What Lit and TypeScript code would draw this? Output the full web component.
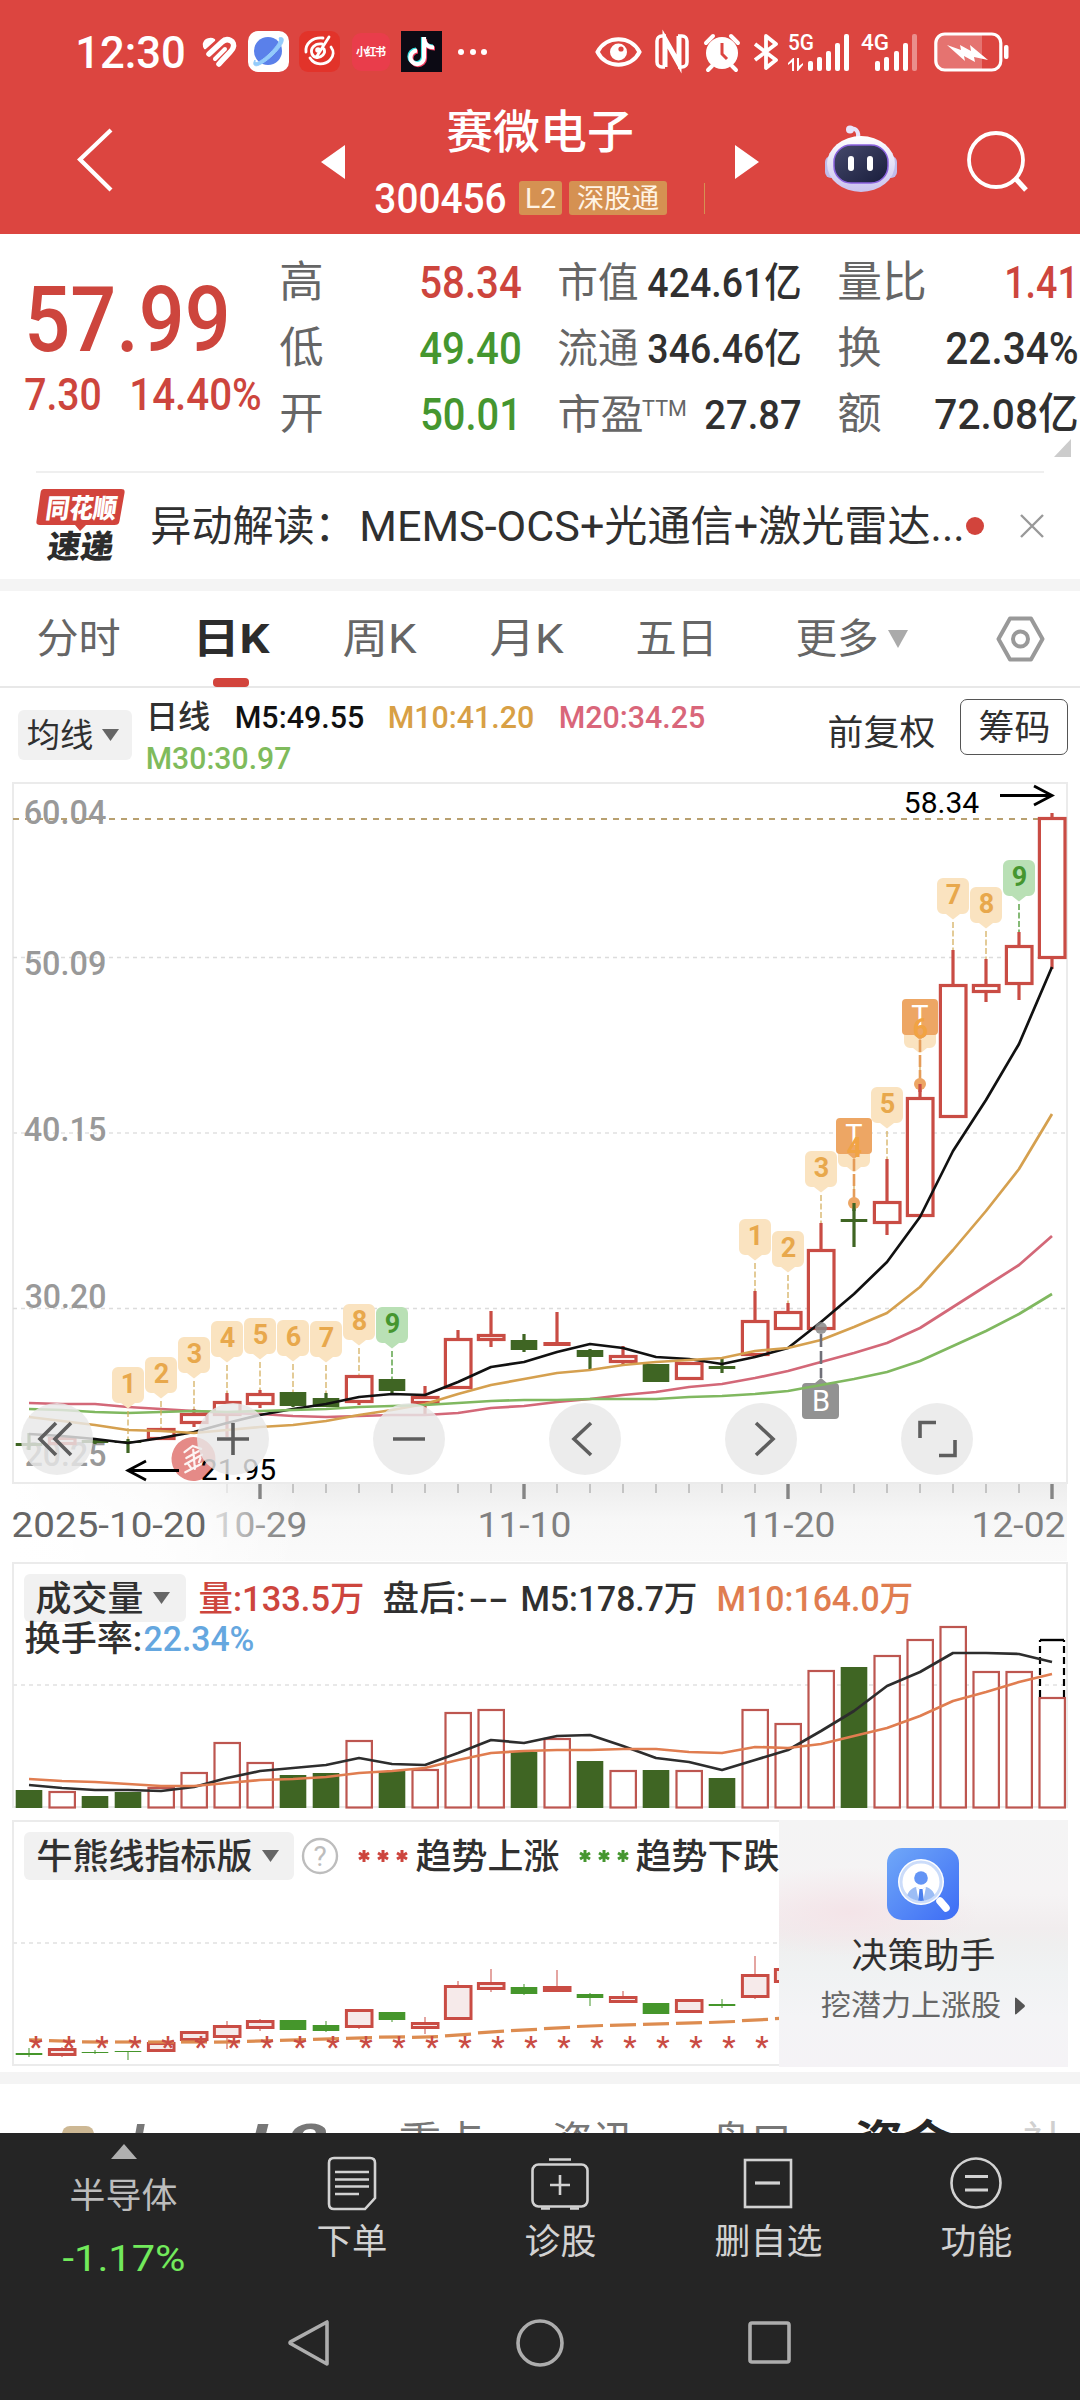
import { LitElement, html, svg, css } from "lit";
import { customElement } from "lit/decorators.js";

/* Text set to an exact ink width, vertically centred in its own box. */
const fit = (text: string, w: number, size: number, cls = "") => html`<svg
  class="fit ${cls}"
  width=${w}
  height=${Math.round(size * 1.2)}
>
  <text
    x=${-0.04 * size}
    y=${size * 0.96}
    font-size=${size}
    textLength=${w + 0.08 * size}
    lengthAdjust="spacingAndGlyphs"
  >${text}</text>
</svg>`;

/* Text inside a chart: x is the ink's left edge, cy its vertical centre. */
const label = (text: string, x: number, cy: number, w: number, size: number, cls = "") => svg`<text
  class=${cls} x=${x - 0.04 * size} y=${cy + 0.36 * size} font-size=${size}
  textLength=${w + 0.08 * size} lengthAdjust="spacingAndGlyphs">${text}</text>`;

const cx = (i: number) => 29 + 33 * i;
const line = (ys: number[]) => ys.map((y, i) => `${cx(i)},${y}`).join(" ");

type Candle = [kind: "r" | "g", top: number, bottom: number, high: number, low: number];

const DAILY: Candle[] = [
  ["g", 1443, 1446, 1433, 1450], ["r", 1437, 1445, 1436, 1446], ["g", 1440, 1443, 1438, 1444],
  ["g", 1441, 1443, 1439, 1453], ["r", 1428, 1440, 1428, 1440], ["r", 1413, 1424, 1409, 1427],
  ["r", 1401, 1416, 1393, 1437], ["r", 1393, 1405, 1390, 1408], ["g", 1392, 1406, 1392, 1407],
  ["g", 1398, 1407, 1393, 1407], ["r", 1375, 1403, 1375, 1405], ["g", 1379, 1391, 1379, 1393],
  ["r", 1396, 1404, 1386, 1414], ["r", 1338, 1389, 1330, 1389], ["r", 1334, 1341, 1311, 1347],
  ["g", 1340, 1350, 1334, 1352], ["r", 1342, 1346, 1312, 1346], ["g", 1350, 1357, 1349, 1369],
  ["r", 1355, 1363, 1346, 1364], ["g", 1364, 1382, 1364, 1382], ["r", 1362, 1380, 1362, 1380],
  ["g", 1366, 1369, 1359, 1373], ["r", 1320, 1356, 1291, 1356], ["r", 1311, 1330, 1303, 1330],
  ["r", 1249, 1330, 1223, 1330], ["g", 1219, 1222, 1203, 1247], ["r", 1201, 1224, 1159, 1235],
  ["r", 1097, 1217, 1084, 1217], ["r", 984, 1118, 950, 1118], ["r", 984, 993, 959, 1002],
  ["r", 945, 985, 932, 1000], ["r", 817, 959, 813, 969],
];

const MA5 = [1434, 1436, 1439, 1443, 1438, 1432, 1423, 1415, 1409, 1404, 1397, 1394, 1395, 1382, 1367, 1362, 1352, 1344, 1348, 1357, 1359, 1364, 1357, 1348, 1322, 1294, 1262, 1217, 1151, 1100, 1044, 967];
const MA10 = [1417, 1421, 1425, 1430, 1431, 1433, 1430, 1427, 1425, 1421, 1415, 1410, 1404, 1394, 1385, 1379, 1373, 1370, 1365, 1362, 1360, 1358, 1351, 1348, 1340, 1327, 1313, 1287, 1250, 1211, 1169, 1114];
const MA20 = [1403, 1404, 1404, 1407, 1409, 1411, 1413, 1414, 1416, 1417, 1416, 1415, 1415, 1413, 1408, 1406, 1402, 1399, 1395, 1392, 1387, 1384, 1378, 1371, 1362, 1353, 1343, 1328, 1307, 1286, 1265, 1236];
const MA30 = [1409, 1410, 1412, 1413, 1412, 1411, 1412, 1411, 1410, 1409, 1407, 1406, 1405, 1403, 1401, 1400, 1400, 1399, 1399, 1399, 1397, 1396, 1394, 1391, 1385, 1379, 1372, 1361, 1346, 1331, 1314, 1294];

const FLAGS: [i: number, n: number, top: number][] = [
  [3, 1, 1367], [4, 2, 1357], [5, 3, 1337], [6, 4, 1321], [7, 5, 1318], [8, 6, 1320], [9, 7, 1321],
  [10, 8, 1304], [11, 9, 1307], [22, 1, 1219], [23, 2, 1231], [24, 3, 1151], [25, 4, 1131],
  [26, 5, 1087], [27, 6, 1012], [28, 7, 878], [29, 8, 887], [30, 9, 860],
];

const VOLUME: ["r" | "g", number][] = [
  ["g", 1790], ["r", 1791], ["g", 1796], ["g", 1792], ["r", 1787], ["r", 1772], ["r", 1742], ["r", 1762],
  ["g", 1775], ["g", 1773], ["r", 1740], ["g", 1771], ["r", 1769], ["r", 1712], ["r", 1709], ["g", 1752],
  ["r", 1738], ["g", 1761], ["r", 1770], ["g", 1770], ["r", 1770], ["g", 1778], ["r", 1709], ["r", 1723],
  ["r", 1670], ["g", 1667], ["r", 1655], ["r", 1639], ["r", 1626], ["r", 1671], ["r", 1671], ["r", 1697],
];
const VMA5 = [1785, 1788, 1790, 1790, 1791, 1787, 1778, 1771, 1768, 1765, 1758, 1764, 1765, 1753, 1740, 1743, 1736, 1735, 1746, 1758, 1762, 1770, 1760, 1750, 1731, 1711, 1686, 1672, 1653, 1653, 1654, 1662];
const VMA10 = [1779, 1781, 1782, 1784, 1786, 1786, 1783, 1780, 1779, 1777, 1773, 1771, 1768, 1760, 1753, 1751, 1750, 1750, 1749, 1749, 1752, 1753, 1747, 1748, 1744, 1736, 1728, 1716, 1701, 1692, 1682, 1674];

const TREND: Candle[] = [
  ["g", 2053, 2055, 2048, 2057], ["r", 2048, 2056, 2047, 2057], ["g", 2052, 2053, 2050, 2054],
  ["g", 2051, 2052, 2051, 2060], ["r", 2042, 2052, 2042, 2052], ["r", 2031, 2041, 2031, 2041],
  ["r", 2025, 2038, 2021, 2049], ["r", 2020, 2029, 2019, 2031], ["g", 2020, 2030, 2020, 2030],
  ["g", 2025, 2031, 2021, 2032], ["r", 2009, 2028, 2009, 2029], ["g", 2012, 2020, 2012, 2022],
  ["r", 2022, 2029, 2017, 2034], ["r", 1985, 2020, 1981, 2020], ["r", 1982, 1990, 1969, 1992],
  ["g", 1987, 1994, 1984, 1995], ["r", 1986, 1992, 1970, 1992], ["g", 1994, 1998, 1993, 2006],
  ["r", 1996, 2003, 1991, 2003], ["g", 2003, 2014, 2003, 2014], ["r", 1999, 2013, 1999, 2013],
  ["g", 2004, 2006, 1999, 2008], ["r", 1974, 1998, 1956, 1999], ["r", 1968, 1983, 1960, 1983],
];
const TREND_LINE = [2040, 2041, 2042, 2042, 2042, 2042, 2042, 2041, 2040, 2039, 2038, 2037, 2037, 2035, 2032, 2030, 2028, 2026, 2025, 2024, 2023, 2022, 2020, 2018];

const candle = ([kind, top, bottom, high, low]: Candle, i: number, wick: number) => {
  const x = cx(i);
  if (kind === "g")
    return svg`<g class="down"><rect x=${x - wick / 2} y=${high} width=${wick} height=${low - high} />
      <rect x=${x - 13.3} y=${top} width="26.6" height=${bottom - top} /></g>`;
  const h = bottom - top;
  return svg`<g class="up"><rect x=${x - wick / 2} y=${high} width=${wick} height=${top - high} />
    <rect x=${x - wick / 2} y=${bottom} width=${wick} height=${Math.max(0, low - bottom)} />
    ${h <= 4
      ? svg`<rect x=${x - 13.6} y=${top} width="27.2" height=${h} />`
      : svg`<rect class="hollow" x=${x - 12.6} y=${top + 1.5} width="25.6" height=${h - 3} />`}</g>`;
};

const flag = ([i, n, top]: [number, number, number]) => {
  const x = cx(i);
  const green = n === 9;
  return svg`<g class=${green ? "flag nine" : "flag"}>
    <line x1=${x} x2=${x} y1=${top + 44} y2=${DAILY[i][3]} stroke-dasharray="6 2.5" />
    <path d="M${x - 10} ${top}h20a6 6 0 0 1 6 6v24a6 6 0 0 1-6 6h-3l-7 5.5l-7-5.5h-3a6 6 0 0 1-6-6v-24a6 6 0 0 1 6-6z" />
    <text x=${x + 0.5} y=${top + 26} text-anchor="middle">${n}</text></g>`;
};

const tFlag = (i: number, top: number, n: number, dot: number) => {
  const x = cx(i);
  return svg`<g class="tee">
    <path d="M${x - 14} ${top}h28a4 4 0 0 1 4 4v28a4 4 0 0 1-4 4h-8l-6 5l-6-5h-8a4 4 0 0 1-4-4v-28a4 4 0 0 1 4-4z" />
    <text class="t" x=${x} y=${top + 27} text-anchor="middle">T</text>
    <text class="n" x=${x + 0.5} y=${top + 39} text-anchor="middle">${n}</text>
    <line x1=${x} x2=${x} y1=${top + 41} y2=${dot} stroke-dasharray="12 3" />
    <circle cx=${x} cy=${dot} r="6" />
    <line class=${i === 25 ? "wick-g" : "wick-r"} x1=${x} x2=${x} y1=${dot} y2=${dot + 8} /></g>`;
};

const caret = (x: number, y: number, w = 17, h = 12) =>
  svg`<path class="caret" d="M${x} ${y}h${w}l${-w / 2} ${h}z" />`;

@customElement("app-root")
export class AppRoot extends LitElement {
  static styles = css`
    :host { display: block; width: 1080px; height: 2400px; overflow: hidden; background: #fff;
      font-family: Roboto, "Noto Sans CJK SC", sans-serif; color: #303030; }
    * { box-sizing: border-box; }
    svg { display: block; }
    svg text { font-family: Roboto, "Noto Sans CJK SC", sans-serif; }
    .fit { overflow: visible; fill: currentColor; flex: none; }
    .m { font-weight: 500; } .b { font-weight: 700; }
    .red { color: #cd453d; fill: #cd453d; } .green { color: #45962f; fill: #45962f; }
    .gray { color: #666; fill: #666; } .ink { fill: #303030; }

    .top { height: 234px; background: #dc4540; color: #fff; }
    .status { height: 103px; padding-left: 77px; display: grid; align-items: center;
      grid-template-columns: 123px 48px 51px 53px 49px 56px 138px 60px 48px 50px 35px 73px 73px 80px; }
    .status > svg { overflow: visible; }
    .title { height: 131px; padding-left: 77px; display: grid; grid-template-columns: 244px 55px 359px 90px 142px 80px; }
    .title > .ico { align-self: start; }
    .mid { display: flex; flex-direction: column; align-items: flex-start; }
    .name { margin: 0 0 0 72px; height: 56px; display: flex; align-items: center; }
    .code { display: grid; height: 78px; align-items: start; grid-template-columns: 143px 50px 135px 2px; margin-top: 22px; }
    .tag { height: 34px; border-radius: 3px; background: #d59152; display: flex; align-items: center; justify-content: center; color: #fff3e4; }
    .l2 { width: 43px; } .sgt { width: 98px; }
    .code > .fit { margin-top: -8px; }
    .sep { height: 31px; width: 1px; margin-top: 2px; background: #d59152; }
    .arrow { margin-top: 42px; } .back { margin-top: 25px; } .bot { margin-top: 22px; } .find { margin-top: 28px; }

    .quote { height: 237px; display: grid; grid-template-columns: 281px 278px 280px 241px; position: relative; padding-top: 15px; }
    .price { padding: 15px 0 0 28px; }
    .chg { display: grid; grid-template-columns: 105px 130px; margin: -5px 0 0 -2px; }
    .col { display: grid; grid-template-rows: 66px 66px 66px; align-items: center; }
    .row { display: flex; justify-content: space-between; align-items: center; }
    .c1 { padding-right: 39px; } .c2 { padding-right: 39px; } .c3 { padding-right: 3px; }
    .pe { display: flex; } .ttm { margin: 5px 0 0 1px; }
    .corner { position: absolute; left: 1054px; top: 205px; }
    .news { margin: 0 36px; height: 108px; border-top: 2px solid #efefef; display: grid; align-items: center;
      grid-template-columns: 116px 814px 54px 24px; }
    .news > .brand { margin-top: -2px; }
    .head { display: flex; gap: 7px; }
    .band { height: 12px; background: #f4f4f4; }
    .tabs { height: 97px; border-bottom: 2px solid #e8e8e8; padding-left: 38px; display: grid; align-items: center; color: #666;
      grid-template-columns: 160px 146px 147px 146px 160px 199px 50px; }
    .tab { display: flex; height: 95px; align-items: center; position: relative; }
    .on { color: #2c2c2c; }
    .on .fit { margin-left: -4px; }
    .on::after { content: ""; position: absolute; left: 15px; bottom: -1px; width: 36px; height: 9px; border-radius: 4px; background: #d2443c; }
    .more { gap: 10px; }
    .ma { height: 94px; padding: 11px 12px 0 18px; display: flex; align-items: flex-start; }
    .chip { margin-top: 11px; width: 114px; height: 50px; border-radius: 6px; background: #f1f1f1; display: flex; align-items: center; gap: 10px; padding-left: 10px; }
    .legend { width: 681px; padding-left: 15px; }
    .l { height: 41px; display: flex; align-items: center; gap: 26.5px; margin-top: -4px; }
    .l + .l { margin-top: 0; }
    .k { color: #111; } .y { color: #d8a045; } .p { color: #d9667a; } .g { color: #7fbb5c; }
    .adj { margin-top: 12px; margin-left: 16px; width: 106px; }
    .btn { width: 108px; height: 56px; margin-left: auto; border: 1px solid #555; border-radius: 7px; display: flex; align-items: center; justify-content: center; }

    .frame { fill: none; stroke: #ebebeb; stroke-width: 2; }
    .grid { stroke: #dcdcdc; stroke-width: 1.3; stroke-dasharray: 4 4; }
    .soft { stroke: #e8e8e8; stroke-width: 2; }
    .now { stroke: #b8a070; stroke-width: 2; stroke-dasharray: 6 6; }
    .axis { fill: #999; font-weight: 500; }
    .date { fill: #808080; }
    .up rect { fill: #c94c44; } .up .hollow { fill: #fff; stroke: #c94c44; stroke-width: 3.2; }
    .down rect { fill: #3f6523; }
    .trend .up .hollow { fill: #f6eaea; stroke-width: 3; } .trend .down rect { fill: #45962b; }
    .ln { fill: none; stroke-width: 2.7; stroke-linejoin: round; }
    .s5 { stroke: #111; } .s10 { stroke: #d5a04f; } .s20 { stroke: #d36878; } .s30 { stroke: #80b860; }
    .v5 { stroke: #2d2d2d; } .v10 { stroke: #e07d50; }
    .flag path { fill: #fae3c0; } .flag line { stroke: #d5b060; stroke-width: 1.3; }
    .flag text { fill: #e8a84c; font-size: 27px; font-weight: 700; }
    .nine path { fill: #b9e0b5; } .nine line { stroke: #45962f; } .nine text { fill: #45962f; }
    .tee path, .tee circle { fill: #eda664; } .tee line { stroke: #e59c58; stroke-width: 2.6; }
    .tee .wick-g { stroke: #3f6523; stroke-width: 3.2; } .tee .wick-r { stroke: #c94c44; stroke-width: 3.2; }
    .tee .t { fill: #fff; font-size: 29px; } .tee .n { fill: #f1a343; font-size: 27px; font-weight: 700; }
    .round { fill: #e8e8e8; fill-opacity: 0.82; }
    .tool { fill: none; stroke: #5e5e5e; stroke-width: 3.6; }
    .arw { fill: none; stroke: #000; stroke-width: 2.8; }
    .caret { fill: #666; }
    .bar-r { fill: #fff; stroke: #bd5650; stroke-width: 2.2; } .bar-g { fill: #3f6523; }
    .orange { fill: #e07d50; } .blue { fill: #65a7df; } .black { fill: #000; }
    .star { fill: #c94c44; font-size: 30px; font-weight: 500; }
    .panel { position: relative; }
    .promo { position: absolute; left: 779px; top: 5px; width: 289px; height: 247px; display: flex; flex-direction: column; align-items: center; padding-right: 1px;
      background: radial-gradient(ellipse 130px 45px at 70px 92px, #f4e4e8 0, transparent 100%), linear-gradient(#f4f4f4 0, #f5f3f4 30%, #f1edee 44%, #efefef 50%, #f0f2f3 62%, #f4f4f6 80%, #f5f3f6); }
    .promo > .ico { margin-top: 28px; } .promo > .pt { margin-top: 14px; }
    .sub { display: flex; align-items: center; gap: 15px; margin: 12px 0 0 1px; }

    .feed { height: 49px; overflow: hidden; display: grid; padding: 33px 0 0 62px; color: #777; align-items: start;
      grid-template-columns: 70px 118px 150px 153px 159px 144px 168px 60px; }
    .feed .it { font-style: italic; margin-top: -5px; }
    .tan { width: 32px; height: 32px; margin-top: 9px; border-radius: 8px; background: #cdb894; }
    .feed .sel { color: #262626; margin-top: -3px; } .fade { color: #d0d0d0; }

    .dock { height: 160px; background: #252525; color: #d2d2d2; display: grid; grid-template-columns: 248px 208px 208px 208px 208px; }
    .cell { display: flex; flex-direction: column; align-items: center; padding-top: 22px; gap: 9px; }
    .first { padding: 11px 1px 0 0; gap: 0; color: #bcbcbc; }
    .first .tx { margin-top: 15px; } .pct { color: #72ea5c; margin-top: 20px; }
    .di { fill: none; stroke: #d2d2d2; stroke-width: 2.6; }
    .nav { height: 107px; background: #252525; display: grid; grid-template-columns: 230px 230px 50px; padding: 25px 0 0 286px; }
    .nav svg { fill: none; stroke: #adadad; stroke-width: 3.6; stroke-linejoin: round; }
  `;

  private status() {
    return html`<div class="status">
      ${fit("12:30", 107, 45, "m")}
      <svg width="38" height="32" viewBox="0 0 38 32" fill="none" stroke="#fff" stroke-linecap="round" stroke-linejoin="round">
        <path d="M4 8c1-5 7-6 10-4L5 12c-1-1-1-2-1-4z" fill="#fff" stroke-width="2.500" /><path d="M9 18L22 6c5-5 14-1 11 6-1 3-5 6-14 16" stroke-width="5.500" /><path d="M15 23L25 13" stroke-width="4" /></svg>
      <svg width="41" height="41" viewBox="0 0 41 41"><rect width="41" height="41" rx="10" fill="#fff" />
        <circle cx="20" cy="20" r="14" fill="#5a80ea" /><path d="M31 7c6-2 5 4 1 9C27 23 18 31 11 34c-4 2-7 0-4-5-1 6 8 0 15-7S33 9 31 7z" fill="#93cbfb" stroke="#93cbfb" stroke-width="1" /></svg>
      <svg width="41" height="41" viewBox="0 0 41 41"><rect width="41" height="41" rx="9" fill="#e2332a" />
        <path d="M24 7C13 6 6 13 7 21M11 27c5 8 15 7 20 2 4-4 4-9 1-13M23 13c-8-1-12 5-10 10 2 4 7 5 11 1 2-2 2-4 1-6M18 25L30 6" fill="none" stroke="#fff" stroke-width="2.800" stroke-linecap="round" /><circle cx="19" cy="19" r="2.800" fill="#fff" /></svg>
      <svg width="38" height="38" viewBox="0 0 38 38"><rect width="38" height="38" rx="9" fill="#e93d4b" />
        <text x="4" y="23" font-size="11" font-weight="700" fill="#fff" textLength="30">小红书</text></svg>
      <svg width="41" height="41" viewBox="0 0 41 41"><rect width="41" height="41" fill="#0c0a14" />
        <g fill="none" stroke-width="4.200"><path d="M22 6v19.500a6.800 6.800 0 1 1-7-7M22 8c1 5 5 7.500 10 7.500" stroke="#35e0e4" />
        <path d="M24 8v19.500a6.800 6.800 0 1 1-7-7M24 10c1 5 5 7.500 10 7.500" stroke="#f23b5f" /><path d="M23 6v20.500a6.800 6.800 0 1 1-7-7M23 8c1 6 5 8.500 10 8.500" stroke="#fff" /></g></svg>
      <svg width="32" height="10" viewBox="0 0 32 10" fill="#fff"><circle cx="4" cy="5" r="3" /><circle cx="16" cy="5" r="3" /><circle cx="27" cy="5" r="3" /></svg>
      <svg width="47" height="32" viewBox="0 0 47 32"><path d="M2.500 16C11-1 36-1 44.500 16C36 33 11 33 2.500 16z" fill="none" stroke="#fff" stroke-width="4" /><circle cx="23.500" cy="16" r="8.500" fill="#fff" /><circle cx="26" cy="13" r="2.600" fill="#dc4540" /></svg>
      <svg width="34" height="35" viewBox="0 0 34 35" fill="none" stroke="#fff"><path d="M11 2H7C4 2 2 4 2 7v21c0 3 2 5 5 5h3M23 2h4c3 0 5 2 5 5v21c0 3-2 5-5 5h-4" stroke-width="3.500" /><path d="M10 33V5l14 25V2" stroke-width="5" /></svg>
      <svg width="38" height="38" viewBox="0 0 38 38"><circle cx="19" cy="20" r="16" fill="#fff" /><path d="M3 10l7-7M35 10l-7-7M9 33l-4 4M29 33l4 4" stroke="#fff" stroke-width="4" stroke-linecap="round" /><path d="M19 10v11l5 5" fill="none" stroke="#dc4540" stroke-width="3" /></svg>
      <svg width="26" height="38" viewBox="0 0 26 38" fill="none" stroke="#fff" stroke-width="3.800" stroke-linejoin="round"><path d="M2 11l21 16-10 8V3l10 8L2 27" /></svg>
      <svg width="64" height="40" viewBox="0 0 64 40" fill="#fff"><text x="0" y="18" font-size="22" font-weight="500" textLength="26" lengthAdjust="spacingAndGlyphs">5G</text>
        <path d="M4 39V30l-4 3v-2l5-5h1v13zM9 26h2v8l4-3v2l-5 6H9z" /><rect x="20" y="29" width="5" height="10" rx="2" /><rect x="29" y="25" width="5" height="14" rx="2" /><rect x="38" y="19" width="5" height="20" rx="2" /><rect x="47" y="11" width="5" height="28" rx="2" /><rect x="56" y="2" width="5" height="37" rx="2" /></svg>
      <svg width="60" height="40" viewBox="0 0 60 40" fill="#fff"><text x="0" y="18" font-size="22" font-weight="500" textLength="28" lengthAdjust="spacingAndGlyphs">4G</text>
        <rect x="14" y="29" width="5" height="10" rx="2" /><rect x="23" y="25" width="5" height="14" rx="2" /><rect x="33" y="19" width="5" height="20" rx="2" /><rect x="42" y="11" width="5" height="28" rx="2" /><rect x="51" y="2" width="5" height="37" rx="2" opacity="0.4" /></svg>
      <svg width="76" height="40" viewBox="0 0 76 40"><path d="M10 2h38v36H10c-5 0-8-3-8-8V10c0-5 3-8 8-8z" fill="#fff" opacity="0.25" /><rect x="1.800" y="2" width="65" height="36" rx="9" fill="none" stroke="#fff" stroke-width="3.200" /><rect x="70" y="13" width="4.500" height="14" rx="2" fill="#fff" />
        <path d="M13 13l14 5-1-5 11 6-1-6 18 15-14-3 1 5-11-6 1 5z" fill="#fff" /></svg>
    </div>`;
  }

  private header() {
    return html`<header class="top">
      ${this.status()}
      <div class="title">
        <svg class="ico back" width="37" height="64" viewBox="0 0 37 64" fill="none" stroke="#fff" stroke-width="4.200"><path d="M34 2L3 31.500 34 62" /></svg>
        <svg class="ico arrow" width="24" height="34" viewBox="0 0 24 34" fill="#fff"><path d="M24 0v34L0 17z" /></svg>
        <div class="mid">
          <div class="name">${fit("赛微电子", 184, 46, "m")}</div>
          <div class="code">
            ${fit("300456", 129, 42, "m")}
            <span class="tag l2">${fit("L2", 29, 27)}</span>
            <span class="tag sgt">${fit("深股通", 80, 27)}</span>
            <span class="sep"></span>
          </div>
        </div>
        <svg class="ico arrow" width="24" height="34" viewBox="0 0 24 34" fill="#fff"><path d="M0 0v34l24-17z" /></svg>
        <svg class="ico bot" width="72" height="68" viewBox="0 0 72 68">
          <defs><linearGradient id="hd" x2="0" y2="1"><stop offset="0" stop-color="#fff" /><stop offset="1" stop-color="#c9c2ee" /></linearGradient>
          <linearGradient id="fc" x2="1" y2="1"><stop offset="0" stop-color="#45496b" /><stop offset="1" stop-color="#191d3c" /></linearGradient></defs>
          <path d="M24 4c8-2 10 4 9 9" fill="none" stroke="#e8e4fb" stroke-width="4" /><circle cx="25" cy="4.500" r="4" fill="#e8e4fb" />
          <rect x="0" y="31" width="12" height="22" rx="6" fill="#c0bcea" /><rect x="60" y="31" width="12" height="22" rx="6" fill="#c0bcea" />
          <ellipse cx="36" cy="39" rx="34" ry="28" fill="url(#hd)" /><rect x="9" y="20" width="54" height="38" rx="17" fill="url(#fc)" stroke="#8a62de" stroke-width="1.500" />
          <rect x="23" y="31" width="6" height="15" rx="3" fill="#fff" /><rect x="42" y="31" width="6" height="15" rx="3" fill="#fff" /></svg>
        <svg class="ico find" width="62" height="62" viewBox="2 0 62 62" fill="none" stroke="#fff" stroke-width="3.800"><circle cx="31" cy="29" r="27" /><path d="M51 48l10 11" stroke-width="5" /></svg>
      </div>
    </header>`;
  }

  private quote() {
    return html`<section class="quote">
        <div class="price">
          ${fit("57.99", 199, 91, "m red")}
          <div class="chg">${fit("7.30", 74, 44, "m red")}${fit("14.40%", 129, 44, "m red")}</div>
        </div>
        <div class="col c1">
          <div class="row">${fit("高", 41, 43, "gray")}${fit("58.34", 99, 44, "m red")}</div>
          <div class="row">${fit("低", 41, 43, "gray")}${fit("49.40", 99, 44, "m green")}</div>
          <div class="row">${fit("开", 41, 43, "gray")}${fit("50.01", 98, 44, "m green")}</div>
        </div>
        <div class="col c2">
          <div class="row">${fit("市值", 78, 41, "gray")}${fit("424.61亿", 151, 41, "m")}</div>
          <div class="row">${fit("流通", 78, 41, "gray")}${fit("346.46亿", 151, 41, "m")}</div>
          <div class="row"><span class="pe">${fit("市盈", 83, 41, "gray")}<span class="ttm">${fit("TTM", 43, 22, "gray")}</span></span>${fit("27.87", 94, 41, "m")}</div>
        </div>
        <div class="col c3">
          <div class="row">${fit("量比", 86, 43, "gray")}${fit("1.41", 71, 44, "m red")}</div>
          <div class="row">${fit("换", 41, 43, "gray")}${fit("22.34%", 130, 44, "m")}</div>
          <div class="row">${fit("额", 41, 43, "gray")}${fit("72.08亿", 141, 43, "m")}</div>
        </div>
        <svg class="corner" width="17" height="18" viewBox="0 0 17 18"><path d="M17 0v18H0z" fill="#ccc" /></svg>
      </section>
      <section class="news">
        <svg class="brand" width="90" height="74" viewBox="0 0 90 74"><path d="M8 1h77c3 0 4 1 3.500 4l-5 28c-.5 3-2 4-5 4H50l-6 6-5-6H4c-3 0-4-1-3.500-4l4-28c.4-3 1.500-4 3.500-4z" fill="#d2443c" />
          <g transform="skewX(-8)" font-weight="900"><text x="13" y="30" font-size="27" fill="#fff" textLength="71" lengthAdjust="spacingAndGlyphs">同花顺</text>
          <text x="20" y="70" font-size="32" fill="#2c2c2c" textLength="66" lengthAdjust="spacingAndGlyphs">速递</text></g></svg>
        <span class="head">${fit("异动解读：", 202, 42)}${fit("MEMS-OCS+光通信+激光雷达...", 602, 42)}</span>
        <svg width="18" height="18" viewBox="0 0 18 18"><circle cx="9" cy="9" r="9" fill="#d2443c" /></svg>
        <svg width="24" height="24" viewBox="0 0 24 24" stroke="#999" stroke-width="2.400"><path d="M1 1l22 22M23 1L1 23" /></svg>
      </section>`;
  }

  private tabs() {
    return html`<div class="band"></div>
      <nav class="tabs">
        <span class="tab">${fit("分时", 81, 41)}</span>
        <span class="tab on">${fit("日K", 74, 41, "b")}</span>
        <span class="tab">${fit("周K", 71, 41)}</span>
        <span class="tab">${fit("月K", 71, 41)}</span>
        <span class="tab">${fit("五日", 79, 41)}</span>
        <span class="tab more">${fit("更多", 80, 41)}<svg width="22" height="18" viewBox="0 0 22 18"><path d="M1 0h20L11 18z" fill="#aaa" /></svg></span>
        <svg width="49" height="46" viewBox="0 0 49 46" fill="none" stroke="#999" stroke-width="4"><path d="M14 2.500h21L46.500 23 35 43.500H14L2.500 23z" stroke-linejoin="round" /><circle cx="24.500" cy="23" r="7.500" /></svg>
      </nav>
      <div class="ma">
        <span class="chip">${fit("均线", 64, 33)}<svg width="17" height="12" viewBox="0 0 17 12">${caret(0, 0)}</svg></span>
        <div class="legend">
          <div class="l">${fit("日线", 62, 32, "m")}${fit("M5:49.55", 127, 32, "m k")}${fit("M10:41.20", 144, 32, "m y")}${fit("M20:34.25", 144, 32, "m p")}</div>
          <div class="l">${fit("M30:30.97", 143, 32, "m g")}</div>
        </div>
        <span class="adj">${fit("前复权", 105, 35)}</span>
        <span class="btn">${fit("筹码", 69, 35)}</span>
      </div>`;
  }

  private daily() {
    return html`<svg width="1080" height="779" viewBox="0 782 1080 779">
      <defs>
        <linearGradient id="sh" x2="0" y2="1"><stop offset="0" stop-color="#ededed" /><stop offset="0.45" stop-color="#f7f7f7" /><stop offset="1" stop-color="#fafafa" /></linearGradient>
        <linearGradient id="wl"><stop offset="0" stop-color="#fff" /><stop offset="0.5" stop-color="#fff" stop-opacity="0.8" /><stop offset="1" stop-color="#fff" stop-opacity="0" /></linearGradient>
        <linearGradient id="fd"><stop offset="0" stop-color="#e0e0e0" /><stop offset="0.6" stop-color="#909090" /><stop offset="1" stop-color="#808080" /></linearGradient>
      </defs>
      <rect x="13" y="1484" width="1054" height="78" fill="url(#sh)" /><rect x="13" y="1484" width="290" height="78" fill="url(#wl)" />
      <rect class="frame" x="13" y="783" width="1054" height="700" />
      <line class="grid" x1="13" x2="1067" y1="957.500" y2="957.500" /><line class="grid soft" x1="13" x2="1067" y1="1133" y2="1133" />
      <line class="grid" x1="13" x2="1067" y1="1308.500" y2="1308.500" /><line class="now" x1="13" x2="1040" y1="819" y2="819" />
      ${label("60.04", 25, 812, 80, 34, "axis")}${label("50.09", 25, 962.5, 80, 34, "axis")}${label("40.15", 25, 1128.5, 80, 34, "axis")}
      ${label("30.20", 26, 1295.5, 79, 34, "axis")}${label("20.25", 26, 1453.5, 79, 34, "axis")}
      ${DAILY.map((c, i) => candle(c, i, 3.2))}
      <polyline class="ln s20" points=${line(MA20)} /><polyline class="ln s5" points=${line(MA5)} />
      <polyline class="ln s10" points=${line(MA10)} />
      <g><circle cx="821" cy="1328" r="6" fill="#888" fill-opacity="0.85" /><line x1="821" x2="821" y1="1334" y2="1378" stroke="#707078" stroke-width="2.600" stroke-dasharray="13 4" />
        <path d="M806 1383h9l6-5 6 5h8a4 4 0 0 1 4 4v28a4 4 0 0 1-4 4h-29a4 4 0 0 1-4-4v-28a4 4 0 0 1 4-4z" fill="#929292" />
        <text x="821" y="1411" font-size="29" fill="#fff" text-anchor="middle">B</text></g>
      <polyline class="ln s30" points=${line(MA30)} />
      ${FLAGS.map(flag)}
      ${tFlag(25, 1118, 4, 1203)}${tFlag(27, 999, 6, 1084)}
      ${label("58.34", 905, 802, 73, 30, "black")}<path class="arw" d="M1000 795.500h51M1034 786l18 9.500-18 9.500" />
      <g transform="translate(193.500 1459) rotate(-8)"><circle r="22" fill="#e58a87" /><path d="M-8-8l9-5 8 4M-7-2l13-5M-9 4L9-3M-10 12l20-7M1-9l-1 19M-6 4l2 4M7 0l-2 4" fill="none" stroke="#fff" stroke-width="2.200" stroke-linecap="round" opacity="0.9" /></g>
      <path class="arw" d="M179 1470.500h-50M146 1461l-18 9.500 18 9.500" />${label("21.95", 202, 1469, 73, 30, "black")}
      ${[57, 233, 409, 585, 761, 937].map((x) => svg`<circle class="round" cx=${x} cy="1439" r="36" />`)}
      <path class="tool" d="M56 1423l-16 16 16 16M71 1423l-16 16 16 16M217 1439h32M233 1423v32M393 1439h32M591 1423l-17 16 17 16M756 1423l17 16-17 16M920 1438v-15.500h16M955 1440v15.500h-16" />
      ${DAILY.map((_, i) => (i < 6 ? "" : svg`<rect x=${cx(i) - (i % 8 === 7 ? 1.7 : 1)} y="1484" width=${i % 8 === 7 ? 3.4 : 2} height=${i % 8 === 7 ? 15 : 9} fill=${i % 8 === 7 ? "#858585" : i === 6 ? "#e6e6e6" : "#c4c4c4"} />`))}
      ${label("2025-10-20", 13, 1524.500, 192, 35, "gray")}
      <g fill="url(#fd)">${label("10-29", 215, 1524.500, 91, 35)}</g>
      ${label("11-10", 479, 1524.500, 91, 35, "date")}${label("11-20", 743, 1524.500, 91, 35, "date")}${label("12-02", 973, 1524.500, 91, 35, "date")}
    </svg>`;
  }

  private volume() {
    return html`<svg width="1080" height="254" viewBox="0 1561 1080 254">
      <rect class="frame" x="13" y="1563" width="1054" height="244" /><line class="grid soft" x1="13" x2="1067" y1="1685" y2="1685" />
      <rect x="24" y="1574" width="162" height="48" rx="6" fill="#f1f1f1" />${label("成交量", 37, 1598, 105, 35, "ink m")}${caret(153, 1592)}
      ${label("量:133.5万", 200, 1598, 163, 35, "red m")}${label("盘后:", 384, 1598, 80, 35, "ink m")}${label("--", 470, 1598, 37, 35, "ink m")}
      ${label("M5:178.7万", 522, 1598, 174, 35, "ink m")}${label("M10:164.0万", 718, 1598, 194, 35, "orange m")}
      ${label("换手率:", 26, 1638, 115, 35, "ink m")}${label("22.34%", 145, 1638, 108, 35, "blue m")}
      ${VOLUME.map(([k, top], i) =>
        k === "g"
          ? svg`<rect class="bar-g" x=${cx(i) - 13.3} y=${top} width="26.6" height=${1808 - top} />`
          : svg`<rect class="bar-r" x=${cx(i) - 12.5} y=${top + 1} width="25.4" height=${1806.5 - top} />`)}
      <path d="M1040 1697v-57M1064 1697v-57" stroke="#000" stroke-width="2.200" stroke-dasharray="7 4" /><path d="M1040 1640h24" stroke="#000" stroke-width="2.400" />
      <polyline class="ln v5" points=${line(VMA5)} /><polyline class="ln v10" points=${line(VMA10)} />
    </svg>`;
  }

  private trend() {
    return html`<section class="panel"><svg class="trend" width="1080" height="257" viewBox="0 1815 1080 257">
        <rect class="frame" x="13" y="1821" width="1054" height="244" /><line class="grid soft" x1="13" x2="1067" y1="1943" y2="1943" />
        <rect x="24" y="1832" width="270" height="48" rx="6" fill="#f1f1f1" />${label("牛熊线指标版", 38, 1856, 213, 35, "ink m")}${caret(262, 1850)}
        <circle cx="320" cy="1856" r="17" fill="none" stroke="#bdbdbd" stroke-width="2.400" /><text x="320" y="1866" font-size="28" fill="#bdbdbd" text-anchor="middle">?</text>
        ${[364, 383, 402].map((x) => svg`<path d="M${x} 1850v12M${x - 5} 1853l10 6M${x - 5} 1859l10-6" stroke="#cd453d" stroke-width="3" />`)}
        ${label("趋势上涨", 417, 1856, 141, 35, "ink m")}
        ${[585, 604, 623].map((x) => svg`<path d="M${x} 1850v12M${x - 5} 1853l10 6M${x - 5} 1859l10-6" stroke="#45962f" stroke-width="3" />`)}
        ${label("趋势下跌", 637, 1856, 141, 35, "ink m")}
        ${TREND.map((c, i) => candle(c, i, 1))}
        ${TREND_LINE.map((y, i) => {
          const n = TREND_LINE[i + 1] ?? y - 2, p = TREND_LINE[i - 1] ?? y, d = (n - p) / 6;
          return svg`<path d="M${cx(i) - (i ? 13 : 0)} ${y - d}L${cx(i) + 13} ${y + d}" stroke="#dd8c50" stroke-width="3.200" />`;
        })}
        ${TREND_LINE.map((_, i) => svg`<text class="star" x=${cx(i) + 7} y="2057" text-anchor="middle">*</text>`)}
      </svg>
      <aside class="promo">
        <svg class="ico" width="72" height="72" viewBox="0 0 72 72"><defs><linearGradient id="bl" x2="1" y2="1"><stop offset="0" stop-color="#70a8f8" /><stop offset="1" stop-color="#3d6cf5" /></linearGradient><clipPath id="lens"><circle cx="34" cy="34" r="19" /></clipPath></defs>
          <rect width="72" height="72" rx="15" fill="url(#bl)" /><circle cx="34" cy="34" r="23" fill="#fff" /><circle cx="34" cy="34" r="20" fill="#fff" stroke="#cbdcfa" stroke-width="3" />
          <circle cx="34" cy="30" r="6.800" fill="#6394f5" /><g clip-path="url(#lens)"><path d="M19 54c0-9 5-14 10-15l5 3 5-3c5 1 10 6 10 15z" fill="#9cbdf5" /><path d="M29 39l5 3 5-3-3 15h-4z" fill="#fff" /><path d="M32.500 41h3l1.500 13h-6z" fill="#4b80ee" /></g>
          <path d="M53 53l6 7" stroke="#fff" stroke-width="7.500" stroke-linecap="round" /></svg>
        <span class="pt">${fit("决策助手", 141, 35)}</span>
        <span class="sub">${fit("挖潜力上涨股", 178, 29, "gray")}<svg width="10" height="18" viewBox="0 0 10 18"><path d="M0 1.500Q0 0 1.500 1L9.500 8q.8 1 0 2L1.500 17Q0 18 0 16.500z" fill="#555" /></svg></span>
      </aside></section>`;
  }

  render() {
    return html`${this.header()}${this.quote()}${this.tabs()}${this.daily()}${this.volume()}${this.trend()}
      <div class="band"></div>
      <div class="feed">
        <span class="tan"></span>
        ${fit("L", 24, 50, "b it")}
        ${fit("L2", 76, 50, "b it")}
        ${fit("重点", 82, 41)}${fit("资讯", 79, 41)}${fit("盘口", 78, 41)}
        <span class="sel">${fit("资金", 94, 47, "b")}</span>${fit("社", 41, 41, "fade")}
      </div>
      <footer class="dock">
        <div class="cell first"><svg width="26" height="15" viewBox="0 0 26 15"><path d="M13 0l13 15H0z" fill="#b0b0b0" /></svg>
          <span class="tx">${fit("半导体", 105, 35)}</span><span class="pct">${fit("-1.17%", 120, 36)}</span></div>
        <div class="cell"><svg class="di" width="52" height="56" viewBox="0 0 52 56"><path d="M8 3h36q5 0 5 5v35l-10 11H8q-5 0-5-5V8q0-5 5-5zM9 17h34M9 24.500h34M9 31.500h34M9 39h24" /></svg>${fit("下单", 68, 35)}</div>
        <div class="cell"><svg class="di" width="60" height="56" viewBox="0 0 60 56"><rect x="2.500" y="9.500" width="55" height="42" rx="6" /><path d="M19 4.500h22M30 20v20M20 30h20M11 53.500h9M40 53.500h9" /></svg>${fit("诊股", 69, 35)}</div>
        <div class="cell"><svg class="di" width="52" height="56" viewBox="0 0 52 56"><rect x="3" y="5" width="46" height="47" /><path d="M13 28h25" stroke-width="3.200" /></svg>${fit("删自选", 105, 35)}</div>
        <div class="cell"><svg class="di" width="52" height="56" viewBox="0 0 52 56"><circle cx="26" cy="28" r="24.500" /><path d="M15 21.500h23M15 35h23" stroke-width="3.200" /></svg>${fit("功能", 69, 35)}</div>
      </footer>
      <div class="nav">
        <svg width="46" height="50" viewBox="0 0 46 50"><path d="M41 4v42L4.500 25.500q-1-.8 0-1.600z" /></svg>
        <svg width="48" height="50" viewBox="0 0 48 50"><circle cx="24" cy="25" r="22" /></svg>
        <svg width="46" height="50" viewBox="0 0 46 50"><rect x="4" y="5" width="39" height="39" rx="2" /></svg>
      </div>`;
  }
}
